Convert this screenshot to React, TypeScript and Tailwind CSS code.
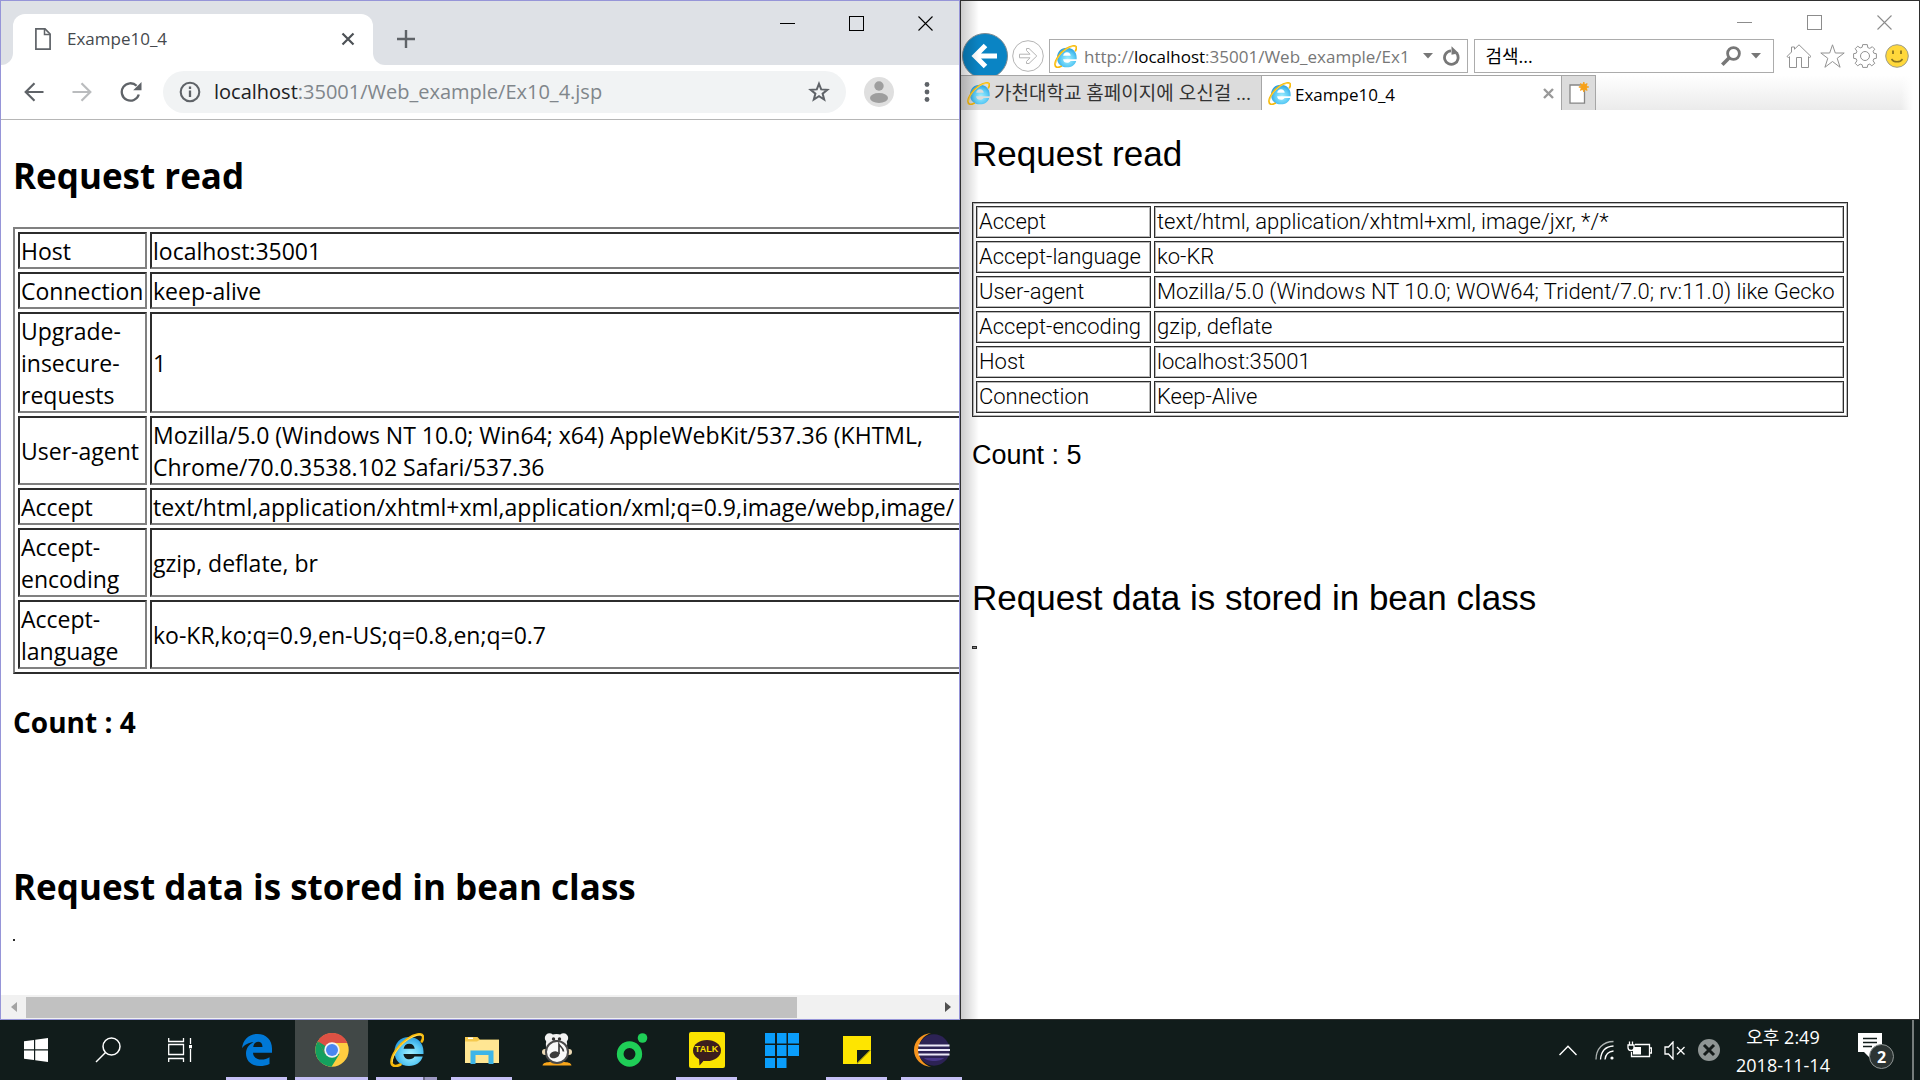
import React, { useId } from "react";

const chromeRows: [string, string][] = [
  ["Host", "localhost:35001"],
  ["Connection", "keep-alive"],
  ["Upgrade-insecure-requests", "1"],
  [
    "User-agent",
    "Mozilla/5.0 (Windows NT 10.0; Win64; x64) AppleWebKit/537.36 (KHTML,\nChrome/70.0.3538.102 Safari/537.36",
  ],
  ["Accept", "text/html,application/xhtml+xml,application/xml;q=0.9,image/webp,image/"],
  ["Accept-encoding", "gzip, deflate, br"],
  ["Accept-language", "ko-KR,ko;q=0.9,en-US;q=0.8,en;q=0.7"],
];

const ieRows: [string, string][] = [
  ["Accept", "text/html, application/xhtml+xml, image/jxr, */*"],
  ["Accept-language", "ko-KR"],
  ["User-agent", "Mozilla/5.0 (Windows NT 10.0; WOW64; Trident/7.0; rv:11.0) like Gecko"],
  ["Accept-encoding", "gzip, deflate"],
  ["Host", "localhost:35001"],
  ["Connection", "Keep-Alive"],
];

/* ---------- shared drawings ---------- */

function IeLogo({ size }: { size: number }) {
  const id = useId();
  return (
    <svg width={size} height={size} viewBox="0 0 34 34" aria-hidden="true">
      <defs>
        <radialGradient id={id} cx="0.55" cy="0.6" r="0.6">
          <stop offset="0" stopColor="#a5f0ff" />
          <stop offset="0.6" stopColor="#5ccbf5" />
          <stop offset="1" stopColor="#2a9ddf" />
        </radialGradient>
      </defs>
      <path
        fill={`url(#${id})`}
        fillRule="evenodd"
        d="M19 4C27.5 4 33.5 10 33.5 18.5V21H13.5C13.8 24.3 16 26.3 19.3 26.3C21.8 26.3 23.5 25.3 24.5 23.6H32.8C31 29.5 26 33 19 33C10.5 33 4.5 27.5 4.5 18.7C4.5 10 10.5 4 19 4ZM13.6 15.8H24.7C24.4 12.6 22.3 10.7 19.2 10.7C16.2 10.7 14.1 12.6 13.6 15.8Z"
      />
      <path
        fill="none"
        stroke="#f7b90a"
        strokeWidth="2.6"
        strokeLinecap="round"
        d="M10.5 31.5C6 34 1.5 33.5 1.5 29C1.5 22 9 11.5 17.5 6C24.5 1.3 32 -0.5 33 3.5C33.3 5 32.8 6.8 31.8 8.5"
      />
      <path
        fill="none"
        stroke="#ffe36a"
        strokeWidth="0.9"
        d="M2.2 29C2.5 22 9.5 12 18 6.5C24.5 2.3 31 0.5 32.5 3.3"
      />
    </svg>
  );
}

function WindowButtons({ className, gap }: { className: string; gap: string }) {
  return (
    <div className={`flex items-center ${gap} ${className}`}>
      <button aria-label="Minimize">
        <svg width="16" height="16" viewBox="0 0 16 16" className="block" shapeRendering="crispEdges">
          <path d="M0 7.5H15" stroke="currentColor" />
        </svg>
      </button>
      <button aria-label="Maximize">
        <svg width="16" height="16" viewBox="0 0 16 16" className="block" shapeRendering="crispEdges">
          <path d="M0.5 0.5H14.5V14.5H0.5Z" fill="none" stroke="currentColor" />
        </svg>
      </button>
      <button aria-label="Close">
        <svg width="16" height="16" viewBox="0 0 16 16" className="block">
          <path d="M0.5 0.5L14.5 14.5M14.5 0.5L0.5 14.5" stroke="currentColor" strokeWidth="1.1" />
        </svg>
      </button>
    </div>
  );
}

/* ---------- Chrome ---------- */

function ChromeTabs() {
  return (
    <div className="flex h-16 shrink-0 bg-[#dee1e6]">
      <div className="w-3 self-stretch bg-white">
        <div className="h-full rounded-br-xl bg-[#dee1e6]" />
      </div>
      <div className="mt-[13px] flex w-[360px] items-center rounded-t-xl bg-white pr-4 pb-0.5 pl-[22px]">
        <svg width="16" height="22" viewBox="0 0 16 22" className="shrink-0">
          <path d="M0.9 0.9H10L15.1 6V21.1H0.9Z" fill="none" stroke="#5f6368" strokeWidth="1.7" />
          <path d="M9.5 1V6.6H15" fill="none" stroke="#5f6368" strokeWidth="1.5" />
        </svg>
        <span className="ml-4 flex-1 text-[17px] text-[#45494d]">Exampe10_4</span>
        <button aria-label="Close tab" className="p-0.5">
          <svg width="14" height="14" viewBox="0 0 14 14" className="block">
            <path d="M1.5 1.5L12.5 12.5M12.5 1.5L1.5 12.5" stroke="#4d5156" strokeWidth="2.2" />
          </svg>
        </button>
      </div>
      <div className="flex flex-1 bg-white">
        <div className="flex flex-1 rounded-bl-xl bg-[#dee1e6] pl-6">
          <button aria-label="New tab" className="mt-3 self-center">
            <svg width="18" height="18" viewBox="0 0 18 18" className="block">
              <path d="M9 0V18M0 9H18" stroke="#5f6368" strokeWidth="2.4" />
            </svg>
          </button>
          <WindowButtons className="mt-[15px] mr-[25px] ml-auto h-4 text-black" gap="gap-[53px]" />
        </div>
      </div>
    </div>
  );
}

function ChromeToolbar() {
  return (
    <div className="flex h-[55px] shrink-0 items-center border-b border-[#b6b6b6] bg-white pl-[23px] text-[#5f6368]">
      <button aria-label="Back" className="mr-7">
        <svg width="20" height="20" viewBox="0 0 20 20" className="block" fill="none" stroke="currentColor" strokeWidth="2.2">
          <path d="M19.5 10H2M10.5 1.2L1.7 10L10.5 18.8" />
        </svg>
      </button>
      <button aria-label="Forward" className="mr-7 text-[#babcbe]">
        <svg width="20" height="20" viewBox="0 0 20 20" className="block" fill="none" stroke="currentColor" strokeWidth="2.2">
          <path d="M0.5 10H18M9.5 1.2L18.3 10L9.5 18.8" />
        </svg>
      </button>
      <button aria-label="Reload" className="mr-[21px]">
        <svg width="22" height="22" viewBox="0 0 22 22" className="block">
          <path d="M18.8 13.5A8.7 8.7 0 1 1 16.6 4.8" fill="none" stroke="currentColor" strokeWidth="2.3" />
          <path d="M21.5 1V9.3H13.2Z" fill="currentColor" />
        </svg>
      </button>
      <div className="flex h-[42px] flex-1 items-center rounded-full bg-[#f1f3f4] pr-4 pl-4">
        <svg width="22" height="22" viewBox="0 0 22 22" className="shrink-0">
          <circle cx="11" cy="11" r="9.3" fill="none" stroke="currentColor" strokeWidth="2.1" />
          <path d="M11 9.5V16M11 5.6V8" stroke="currentColor" strokeWidth="2.3" />
        </svg>
        <div role="textbox" aria-label="Address" className="ml-[13px] flex-1 text-xl whitespace-nowrap text-[#80868b]">
          <span className="text-[#202124]">localhost</span>:35001/Web_example/Ex10_4.jsp
        </div>
        <button aria-label="Bookmark this page">
          <svg width="22" height="22" viewBox="0 0 22 22" className="block">
            <path
              d="M11 2.8L13.2 8.4L19.3 8.8L14.6 12.6L16.2 18.5L11 15.2L5.8 18.5L7.4 12.6L2.7 8.8L8.8 8.4Z"
              fill="none"
              stroke="currentColor"
              strokeWidth="2"
            />
          </svg>
        </button>
      </div>
      <button aria-label="Profile" className="ml-[18px]">
        <svg width="30" height="30" viewBox="0 0 30 30" className="block">
          <circle cx="15" cy="15" r="15" fill="#dfdfdf" />
          <circle cx="15" cy="9" r="4.7" fill="#9e9e9e" />
          <ellipse cx="15" cy="21" rx="9" ry="5" fill="#9e9e9e" />
        </svg>
      </button>
      <button aria-label="Menu" className="mr-[27px] ml-7">
        <svg width="10" height="22" viewBox="0 0 10 22" className="block" fill="currentColor">
          <circle cx="5" cy="3.5" r="2.4" />
          <circle cx="5" cy="11" r="2.4" />
          <circle cx="5" cy="18.5" r="2.4" />
        </svg>
      </button>
    </div>
  );
}

function ChromeWindow() {
  return (
    <section className="flex w-1/2 flex-col overflow-hidden border border-[#9695d8] bg-white">
      <ChromeTabs />
      <ChromeToolbar />
      <main className="min-h-0 flex-1 overflow-hidden pl-3 text-black">
        <h2 className="mt-8 text-[35px] leading-[48px] font-bold">Request read</h2>
        <table className="mt-[27px] w-[1110px] table-fixed border-separate border-spacing-[3px] border-2 border-t-[#808080] border-r-[#2c2c2c] border-b-[#2c2c2c] border-l-[#808080] text-[23px] leading-8">
          <colgroup>
            <col className="w-[129px]" />
            <col />
          </colgroup>
          <tbody>
            {chromeRows.map(([name, value]) => (
              <tr key={name}>
                <td className="border-2 border-t-[#2c2c2c] border-r-[#808080] border-b-[#808080] border-l-[#2c2c2c] px-px pt-px">
                  {name}
                </td>
                <td className="border-2 border-t-[#2c2c2c] border-r-[#808080] border-b-[#808080] border-l-[#2c2c2c] px-px pt-px whitespace-pre-line">
                  {value}
                </td>
              </tr>
            ))}
          </tbody>
        </table>
        <h3 className="mt-[30px] text-[28px] leading-9 font-bold">Count : 4</h3>
        <h2 className="mt-[123px] text-[35px] leading-[48px] font-bold">Request data is stored in bean class</h2>
        <div className="mt-7 size-0.5 bg-[#2c2c2c]" />
      </main>
      <div className="flex h-6 shrink-0 items-center bg-[#f1f1f1]">
        <button aria-label="Scroll left" className="flex w-[25px] justify-center">
          <svg width="7" height="12" viewBox="0 0 7 12">
            <path d="M7 1V11L1 6Z" fill="#a3a3a3" />
          </svg>
        </button>
        <div className="flex-1">
          <div className="h-[21px] w-[84.5%] bg-[#c1c1c1]" />
        </div>
        <button aria-label="Scroll right" className="flex w-[21px] justify-center">
          <svg width="7" height="12" viewBox="0 0 7 12">
            <path d="M0 1V11L6 6Z" fill="#505050" />
          </svg>
        </button>
      </div>
    </section>
  );
}

/* ---------- Internet Explorer ---------- */

function Caret() {
  return (
    <svg width="10" height="6" viewBox="0 0 10 6" className="block">
      <path d="M0 0H10L5 5.5Z" fill="#777" />
    </svg>
  );
}

function IeToolbar() {
  return (
    <div className="flex h-9 shrink-0 items-center">
      <button aria-label="Back" className="-my-2.5 ml-px">
        <svg width="46" height="46" viewBox="0 0 46 46" className="block">
          <circle cx="23" cy="23" r="22.5" fill="#0a84c4" stroke="#7d8a91" />
          <path d="M35 23H13M23.5 12.5L13 23L23.5 33.5" fill="none" stroke="#fff" strokeWidth="5" />
        </svg>
      </button>
      <button aria-label="Forward" className="ml-1">
        <svg width="32" height="32" viewBox="0 0 32 32" className="block" fill="none" stroke="#b4b4b4">
          <circle cx="16" cy="16" r="15.3" />
          <path d="M7.5 14.2H18L14.5 10.5V8.5H17L24.8 16L17 23.5H14.5V21.5L18 17.8H7.5Z" />
        </svg>
      </button>
      <div className="ml-[5px] flex h-[34px] flex-[424] items-center border border-[#acacac] bg-white pl-1">
        <IeLogo size={23} />
        <div
          role="textbox"
          aria-label="Address"
          className="mt-0.5 ml-[7px] flex-1 text-[17px] whitespace-nowrap text-[#777]"
        >
          http://<span className="text-black">localhost</span>:35001/Web_example/Ex1
        </div>
        <button aria-label="Show address list" className="mr-[9px]">
          <Caret />
        </button>
        <button aria-label="Refresh" className="mr-[7px]">
          <svg width="18" height="20" viewBox="0 0 18 20" className="block">
            <path d="M14.5 7.2A6.8 6.8 0 1 1 9 4.8" fill="none" stroke="#777" strokeWidth="2.8" />
            <path d="M9.5 0.3L16.8 7.3L9.5 8.8Z" fill="#777" />
          </svg>
        </button>
      </div>
      <div className="ml-1.5 flex h-[34px] flex-[295] items-center border border-[#acacac] bg-white pl-2.5">
        <input
          aria-label="검색"
          placeholder="검색..."
          className="w-0 flex-1 bg-transparent text-lg text-black outline-none placeholder:text-black"
        />
        <button aria-label="Search">
          <svg width="20" height="20" viewBox="0 0 20 20" className="block" fill="none" stroke="#777">
            <circle cx="12.5" cy="7.5" r="5.9" strokeWidth="2.8" />
            <path d="M8 12L1.3 18.7" strokeWidth="3.6" />
          </svg>
        </button>
        <button aria-label="Search options" className="mr-3 ml-2.5">
          <Caret />
        </button>
      </div>
      <div className="mr-2.5 ml-3 flex items-center gap-2">
        <button aria-label="Home">
          <svg width="26" height="24" viewBox="0 0 26 24" className="block" fill="none" stroke="#929292">
            <path d="M13 0.8L25 12.5L23.5 13.5L22.5 12.7V23.5H15.5V13.5H10.5V23.5H3.5V12.7L2.5 13.5L1 12.5L5.5 8V3H8.5V5.2Z" />
          </svg>
        </button>
        <button aria-label="Favorites">
          <svg width="25" height="24" viewBox="0 0 25 24" className="block" fill="none" stroke="#929292">
            <path d="M12.5 0.8L15.3 9H24.2L17.2 14.3L20.1 23.3L12.5 17.5L4.9 23.3L7.8 14.3L0.8 9H9.7Z" />
          </svg>
        </button>
        <button aria-label="Tools">
          <svg width="24" height="24" viewBox="0 0 24 24" className="block" fill="none" stroke="#929292">
            <circle cx="12" cy="12" r="4.5" />
            <path d="M9.7 0.6H14.3L14.8 3.6L16.8 4.4L19.3 2.7L21.8 5.2L20.1 7.2L20.8 9.2L23.4 9.7V14.3L20.8 14.8L20.1 16.8L21.8 19.3L18.8 21.8L16.8 20.1L14.8 20.8L14.3 23.4H9.7L9.2 20.8L7.2 20.1L4.7 21.8L2.2 19.3L3.9 16.8L3.2 14.8L0.6 14.3V9.7L3.2 9.2L3.9 7.2L2.2 4.7L4.7 2.2L7.2 3.9L9.2 3.2Z" />
          </svg>
        </button>
        <button aria-label="Send a smile">
          <svg width="24" height="24" viewBox="0 0 24 24" className="block">
            <circle cx="12" cy="12" r="11.3" fill="#ffd83b" stroke="#9c9c8c" />
            <path d="M8 6.5V10M16 6.5V10" stroke="#8a7420" strokeWidth="1.8" />
            <path d="M6.5 15C9 18.8 15 18.8 17.5 15" fill="none" stroke="#8a7420" strokeWidth="1.5" />
          </svg>
        </button>
      </div>
    </div>
  );
}

function IeTabs() {
  return (
    <div className="relative mt-px flex h-[35px] shrink-0">
      <a
        href="#home"
        className="flex w-[301px] items-center border-t border-r border-[#a6a6a6] bg-[#dcdcdc] pl-1.5 whitespace-nowrap text-[#333]"
      >
        <IeLogo size={23} />
        <span className="ml-1 text-[19px]">가천대학교 홈페이지에 오신걸 ...</span>
      </a>
      <div className="flex w-[299px] items-center border-t border-[#a6a6a6] bg-white pl-1.5">
        <IeLogo size={23} />
        <span className="mt-1 ml-1 flex-1 text-[17px] text-black">Exampe10_4</span>
        <button aria-label="Close tab" className="mr-[7px]">
          <svg width="11" height="11" viewBox="0 0 11 11" className="block">
            <path d="M1 1L10 10M10 1L1 10" stroke="#999" strokeWidth="2.4" />
          </svg>
        </button>
      </div>
      <button
        aria-label="New tab"
        className="flex w-[35px] items-center justify-center border-x border-t border-[#a6a6a6] bg-[#dcdcdc]"
      >
        <svg width="20" height="22" viewBox="0 0 20 22">
          <path d="M1 3H15.5V21.2H1Z" fill="#fff" stroke="#858585" strokeWidth="1.3" />
          <circle cx="14.8" cy="5" r="3.5" fill="#ffa81c" />
          <path d="M14.8 0V10M9.8 5H19.8M11.3 1.5L18.3 8.5M18.3 1.5L11.3 8.5" stroke="#f5a01a" strokeWidth="1.4" />
        </svg>
      </button>
      <div className="mr-1.5 flex-1 bg-linear-to-b from-white to-[#ebebeb]">
        <div className="ml-auto h-full w-3 bg-linear-to-r from-transparent to-white" />
      </div>
    </div>
  );
}

function IeWindow() {
  return (
    <section className="relative flex w-1/2 flex-col border border-[#2f2f2f] bg-white">
      <WindowButtons className="mt-3.5 mr-[26px] ml-auto h-4 shrink-0 text-[#8c8c8c]" gap="gap-[54px]" />
      <div className="mt-[7px] flex flex-col">
        <IeToolbar />
        <IeTabs />
      </div>
      <main className="pl-[11px] font-['Liberation_Sans',sans-serif] text-black">
        <h2 className="mt-6 text-[35px] leading-10">Request read</h2>
        <table className="mt-7 w-[876px] border-separate border-spacing-[3px] border border-[#2c2c2c] font-['Roboto',sans-serif] text-[22px] leading-7 font-light inset-shadow-[0_0_0_1px_#b8b8b8]">
          <colgroup>
            <col className="w-[175px]" />
            <col />
          </colgroup>
          <tbody>
            {ieRows.map(([name, value]) => (
              <tr key={name}>
                <td className="border border-[#2c2c2c] px-0.5 pt-px pb-px whitespace-nowrap inset-shadow-[0_0_0_1px_#b8b8b8]">
                  {name}
                </td>
                <td className="border border-[#2c2c2c] px-0.5 pt-px pb-px whitespace-nowrap inset-shadow-[0_0_0_1px_#b8b8b8]">
                  {value}
                </td>
              </tr>
            ))}
          </tbody>
        </table>
        <h3 className="mt-[22px] text-[27px] leading-8">Count : 5</h3>
        <h2 className="mt-[107px] text-[35px] leading-10">Request data is stored in bean class</h2>
        <div className="mt-7 h-[3px] w-[5px] border border-[#2c2c2c] bg-[#888]" />
      </main>
      <div className="pointer-events-none absolute inset-y-0 left-0 w-[18px] bg-linear-to-r from-black/20 to-transparent" />
    </section>
  );
}

/* ---------- Taskbar ---------- */

function TaskbarApp({
  label,
  active = false,
  running = false,
  children,
}: {
  label: string;
  active?: boolean;
  running?: boolean;
  children: React.ReactNode;
}) {
  return (
    <button aria-label={label} className="flex w-[75px] flex-col items-center">
      <span className={`flex w-[73px] flex-1 items-center justify-center ${active ? "bg-[#414847]" : ""}`}>
        {children}
      </span>
      <span className={`-mt-[3px] h-[3px] ${active ? "w-[73px]" : "w-[61px]"} ${running ? "bg-[#c5c0f6]" : ""}`} />
    </button>
  );
}

function Taskbar() {
  return (
    <footer className="flex h-[60px] shrink-0 bg-[#111c1b] text-white">
      <button aria-label="Start" className="flex w-[72px] items-center justify-center">
        <svg width="24" height="24" viewBox="0 0 24 24" fill="#fff">
          <path d="M0 3.3L10 2V11.3H0ZM11.2 1.8L24 0V11.3H11.2ZM0 12.6H10V22L0 20.7ZM11.2 12.6H24V24L11.2 22.2Z" />
        </svg>
      </button>
      <button aria-label="Search" className="flex w-[72px] items-center justify-center">
        <svg width="26" height="26" viewBox="0 0 26 26" fill="none" stroke="#fff" strokeWidth="1.5">
          <circle cx="16.5" cy="9.5" r="8.5" />
          <path d="M10.5 15.5L1 25" />
        </svg>
      </button>
      <button aria-label="Task view" className="flex w-[72px] items-center justify-center">
        <svg width="24" height="24" viewBox="0 0 24 24" fill="none" stroke="#fff" strokeWidth="1.3">
          <path d="M0.7 0V3.5H15.5V0M0.7 6.5H15.5V16.5H0.7ZM0.7 24V20.5H15.5V24M22.5 0V6M22.5 11V24" />
          <path d="M21 7H24V10.3H21Z" fill="#fff" stroke="none" />
        </svg>
      </button>
      <div className="ml-[3px] flex">
        <TaskbarApp label="Microsoft Edge" running>
          <svg width="30" height="32" viewBox="0 0 30 32">
            <path
              fill="#0078d7"
              d="M0 14.3C1 6 6.5 0 15.5 0C24.5 0 30 6.3 30 14.5V18.8H11C11.2 23.5 15.3 25.5 19.5 25.5C22.5 25.5 25 24.7 27.5 23.2V30C24.5 31.5 21.3 32 18 32C9.5 32 4 27 4 19.5C4 14.5 6.8 10.6 11.5 8.3C7 8.3 2.5 10.8 0 14.3ZM11.2 13H20.5C20.5 9.5 18.8 7.7 16.2 7.7C13.5 7.7 11.7 9.7 11.2 13Z"
            />
          </svg>
        </TaskbarApp>
        <TaskbarApp label="Chrome" active running>
          <svg width="34" height="34" viewBox="0 0 34 34">
            <circle cx="17" cy="17" r="16.7" fill="#ffcd40" />
            <path d="M17 17L2.5 8.7A16.7 16.7 0 0 0 16.5 33.7L24.5 21Z" fill="#14a05e" />
            <path d="M2.8 8.2A16.7 16.7 0 0 1 32.4 10H17L10 21Z" fill="#dd5144" />
            <path d="M2.8 8.2L10.3 21L17 17Z" fill="#14a05e" />
            <circle cx="17" cy="17" r="7.7" fill="#f3f3f3" />
            <circle cx="17" cy="17" r="6" fill="#4a86f0" />
          </svg>
        </TaskbarApp>
        <button aria-label="Internet Explorer" className="flex w-[75px] flex-col items-center">
          <span className="flex flex-1 items-center justify-center">
            <IeLogo size={34} />
          </span>
          <span className="-mt-[3px] flex h-[3px] w-[61px]">
            <span className="w-[47px] bg-[#c5c0f6]" />
            <span className="w-0.5 bg-[#6c6a86]" />
            <span className="flex-1 bg-[#9c98c2]" />
          </span>
        </button>
        <TaskbarApp label="File Explorer" running>
          <svg width="34" height="27" viewBox="0 0 34 27">
            <path d="M0 0H12.5L15 2.7H34V26H0Z" fill="#f5c94d" />
            <path d="M3 1.3H8" stroke="#fff" strokeWidth="1.5" />
            <path d="M0 4.5H12L15 2.7H34V26H0Z" fill="#ffe693" />
            <path d="M5.5 27V13.5H28.5V27H23.5V18H10.5V27Z" fill="#3db5e8" />
          </svg>
        </TaskbarApp>
        <TaskbarApp label="Music player">
          <svg width="30" height="34" viewBox="0 0 30 34">
            <path d="M0.5 32.5C1 29.5 5 29 9 29H21C25 29 29 29.5 29.5 32.5Z" fill="#f9a61a" />
            <circle cx="7.5" cy="5" r="4.7" fill="#f2f2f2" />
            <circle cx="21.5" cy="5" r="4.7" fill="#f2f2f2" />
            <path d="M4 14C3 5 8 1 14.5 1S26 5 25 14Z" fill="#f2f2f2" />
            <circle cx="11.5" cy="6" r="1.7" fill="#333" />
            <circle cx="17.5" cy="6" r="1.7" fill="#333" />
            <ellipse cx="14.5" cy="8.5" rx="3.5" ry="1.5" fill="#444" />
            <circle cx="3" cy="19" r="3" fill="#ecd9b5" />
            <circle cx="27" cy="19" r="3" fill="#ecd9b5" />
            <circle cx="15" cy="19" r="11" fill="#fafafa" stroke="#4a4a4a" strokeWidth="2" />
            <ellipse cx="12.5" cy="21.8" rx="5" ry="3.3" fill="#3c3c3c" transform="rotate(-15 12.5 21.8)" />
            <path d="M17 21V11.5C18.5 14 21.5 15 21.5 18.5" fill="none" stroke="#3c3c3c" strokeWidth="1.7" />
          </svg>
        </TaskbarApp>
        <TaskbarApp label="Melon">
          <svg width="32" height="34" viewBox="0 0 32 34">
            <circle cx="13.5" cy="21" r="9.3" fill="none" stroke="#1fce57" strokeWidth="6.7" />
            <circle cx="26.5" cy="5" r="4.8" fill="#1fce57" />
          </svg>
        </TaskbarApp>
        <TaskbarApp label="KakaoTalk" running>
          <span className="flex size-9 items-center justify-center rounded-[2px] bg-[#fbe300]">
            <span className="relative flex h-[21px] w-7 items-center justify-center rounded-[50%] bg-[#3b1e1e] font-['Liberation_Sans',sans-serif] text-[9px] font-bold text-[#fbe300]">
              TALK
              <svg width="8" height="8" viewBox="0 0 8 8" className="absolute top-[18px] left-[5px]">
                <path d="M1 0H8L1.5 7.5Z" fill="#3b1e1e" />
              </svg>
            </span>
          </span>
        </TaskbarApp>
        <TaskbarApp label="Tiles">
          <svg width="34" height="35" viewBox="0 0 34 35" fill="#0a9dfb">
            <path d="M0 0H10V10.5H0ZM12 0H21.5V10.5H12ZM23 0H34V10.5H23ZM0 12H10V23H0ZM12 12H21.5V23H12ZM23 12H34V23H23ZM0 25H10V35H0ZM12 25H21.5V35H12Z" />
          </svg>
        </TaskbarApp>
        <TaskbarApp label="Sticky Notes" running>
          <svg width="28" height="28" viewBox="0 0 28 28">
            <path d="M0 0H28V14L14 28H0Z" fill="#fee500" />
            <path d="M14 14H27L14 27Z" fill="#111c1b" />
            <path d="M28 14V28H14Z" fill="#fee500" />
          </svg>
        </TaskbarApp>
        <TaskbarApp label="Eclipse" running>
          <svg width="36" height="34" viewBox="0 0 36 34">
            <path d="M17 0C7 1 0 8 0 17S7 33 17 34C9 31 4.5 25 4.5 17S9 3 17 0Z" fill="#f7941e" />
            <circle cx="20" cy="17" r="15.7" fill="#2c2255" />
            <path d="M10 25H30C27 29 13 29 10 25Z" fill="#473788" />
            <path d="M4.5 12.5H35.5M4 17H36M4.5 21.5H35.5" stroke="#ece9f8" strokeWidth="1.9" />
          </svg>
        </TaskbarApp>
      </div>
      <div className="ml-auto flex items-center">
        <button aria-label="Show hidden icons">
          <svg width="18" height="11" viewBox="0 0 18 11" className="block" fill="none" stroke="#fff" strokeWidth="1.4">
            <path d="M0.5 10L9 1.3L17.5 10" />
          </svg>
        </button>
        <button aria-label="Network" className="ml-[18px]">
          <svg width="20" height="20" viewBox="0 0 20 20" className="block" fill="none" stroke="#fff" strokeWidth="1.3">
            <path d="M1 19.5C1 9 8 1.5 18.5 1.5" stroke="#aeb3b2" />
            <path d="M5.5 19.5C6 11.5 10.5 6.5 18.5 6" />
            <path d="M10 19.5C10.5 14.5 13.5 11.5 18.5 11" />
            <circle cx="17" cy="18" r="1.6" fill="#fff" stroke="none" />
          </svg>
        </button>
        <button aria-label="Battery" className="ml-3">
          <svg width="25" height="18" viewBox="0 0 25 18" className="block" fill="none" stroke="#fff" strokeWidth="1.3">
            <path d="M8 3.5H22.5V15.5H4.5V11M22.5 7H24.5V12H22.5" />
            <path d="M6 6H14V13.5H6Z" fill="#fff" stroke="none" />
            <path d="M1 4V6.5C1 10.5 7 10.5 7 6.5V4ZM2.5 4V0.5M5.5 4V0.5" fill="#111c1b" />
          </svg>
        </button>
        <button aria-label="Volume muted" className="ml-3">
          <svg width="21" height="19" viewBox="0 0 21 19" className="block" fill="none" stroke="#fff" strokeWidth="1.3">
            <path d="M1 6H4.5L9 1V18L4.5 13H1ZM13 6L20.5 13.5M20.5 6L13 13.5" />
          </svg>
        </button>
        <button aria-label="Blocked" className="ml-[13px]">
          <svg width="22" height="22" viewBox="0 0 22 22" className="block">
            <circle cx="11" cy="11" r="11" fill="#8f9594" />
            <path d="M6 6L16 16M16 6L6 16" stroke="#151b1a" strokeWidth="3" />
          </svg>
        </button>
        <button aria-label="Clock" className="ml-3.5 flex w-[98px] flex-col items-center pt-0.5 text-lg leading-7 whitespace-nowrap">
          <span>오후 2:49</span>
          <span>2018-11-14</span>
        </button>
        <button aria-label="Notifications" className="relative ml-[26px]">
          <svg width="37" height="37" viewBox="0 0 37 37" className="block">
            <path d="M0 1H24V20H12L12 26L6 20H0Z" fill="#fff" />
            <path d="M5 6.5H19M5 10.5H19M5 14.5H14" stroke="#111c1b" strokeWidth="1.4" />
            <circle cx="23.5" cy="24.5" r="12" fill="#2c3433" stroke="#8f9594" />
          </svg>
          <span className="absolute top-[15px] left-[19px] text-base leading-5 font-bold">2</span>
        </button>
        <span className="ml-[17px] h-[60px] w-0.5 bg-[#767d7c]" />
        <span className="w-1.5" />
      </div>
    </footer>
  );
}

export default function App() {
  return (
    <div className="flex h-screen flex-col overflow-hidden bg-white font-['Open_Sans','Noto_Sans_CJK_KR',sans-serif]">
      <div className="flex min-h-0 flex-1">
        <ChromeWindow />
        <IeWindow />
      </div>
      <Taskbar />
    </div>
  );
}
